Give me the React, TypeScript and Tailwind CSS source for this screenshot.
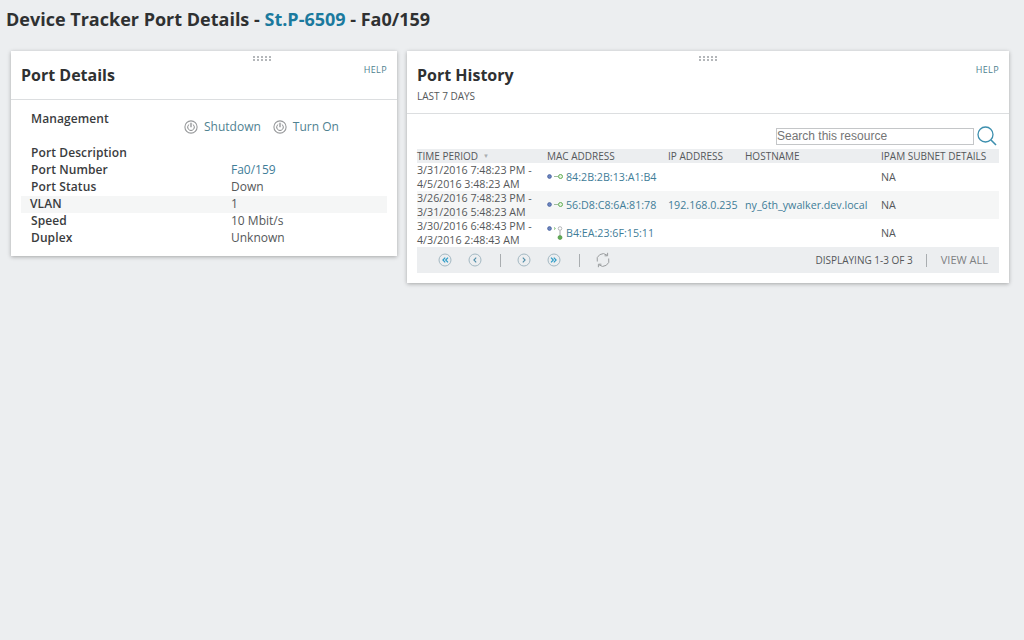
const font = { fontFamily: '"Open Sans", sans-serif' };

function Grip() {
  // five by two dots drag handle
  return (
    <div className="grid grid-cols-5 gap-x-[2px] gap-y-[1px] w-[18px]">
      {Array.from({ length: 10 }).map((_, i) => (
        <span key={i} className="w-[2px] h-[2px] bg-[#b4b7ba]" />
      ))}
    </div>
  );
}

function PowerIcon() {
  return (
    <svg width="14" height="14" viewBox="0 0 14 14" fill="none" className="shrink-0">
      <circle cx="7" cy="7" r="6.1" stroke="#97999b" strokeWidth="1.1" />
      <path d="M5.2 4.4a3.3 3.3 0 1 0 3.6 0" stroke="#85888a" strokeWidth="1" />
      <path d="M7 2.8v4.4" stroke="#85888a" strokeWidth="1.2" />
    </svg>
  );
}

function PagerIcon({ dir, double }: { dir: 'l' | 'r'; double?: boolean }) {
  const pts = dir === 'l' ? ['M7.2 4.6 4.9 7l2.3 2.4', 'M10 4.6 7.7 7l2.3 2.4'] : ['M6.8 4.6 9.1 7l-2.3 2.4', 'M4 4.6 6.3 7 4 9.4'];
  const single = dir === 'l' ? 'M8.2 4.6 5.9 7l2.3 2.4' : 'M5.8 4.6 8.1 7l-2.3 2.4';
  return (
    <svg width="14" height="14" viewBox="0 0 14 14" fill="none">
      <circle cx="7" cy="7" r="6" stroke="#a3b8c2" strokeWidth="1" />
      {double ? (
        pts.map((d) => <path key={d} d={d} stroke="#2d9cc7" strokeWidth="1.2" />)
      ) : (
        <path d={single} stroke="#4d8ba6" strokeWidth="1.1" />
      )}
    </svg>
  );
}

function RefreshIcon() {
  return (
    <svg width="16" height="16" viewBox="0 0 16 16" fill="none">
      <path d="M2.3 9.5A6 6 0 0 1 12 3.2" stroke="#9a9d9f" strokeWidth="1" />
      <path d="M13.7 6.5A6 6 0 0 1 4 12.8" stroke="#9a9d9f" strokeWidth="1" />
      <path d="M12.6 0.8v3h-3" stroke="#9a9d9f" strokeWidth="1" />
      <path d="M3.4 15.2v-3h3" stroke="#9a9d9f" strokeWidth="1" />
    </svg>
  );
}

function LinkIcon({ kind }: { kind: 'straight' | 'wireless' }) {
  if (kind === 'straight') {
    return (
      <svg width="18" height="8" viewBox="0 0 18 8" fill="none" className="shrink-0">
        <circle cx="2.5" cy="3.5" r="1.9" fill="#6d86c0" stroke="#3d5796" strokeWidth="0.7" />
        <path d="M7 3.5h4" stroke="#9dbb9d" strokeWidth="1" />
        <circle cx="13.5" cy="3.5" r="2" fill="#e6f3e0" stroke="#62ad54" strokeWidth="1" />
      </svg>
    );
  }
  return (
    <svg width="18" height="14" viewBox="0 0 18 14" fill="none" className="shrink-0">
      <circle cx="2.5" cy="2.5" r="1.9" fill="#6d86c0" stroke="#3d5796" strokeWidth="0.7" />
      <path d="M7 1.5l1.4 1-1.4 1" stroke="#62ad54" strokeWidth="0.8" />
      <circle cx="13" cy="2.5" r="1.8" fill="#fff" stroke="#a3a6a8" strokeWidth="0.8" />
      <path d="M13 4.5v5" stroke="#a3a6a8" strokeWidth="1" />
      <circle cx="13" cy="11.5" r="2" fill="#62ad54" stroke="#3f8a35" strokeWidth="0.6" />
    </svg>
  );
}

const detailRows = [
  { label: 'Port Description', value: '' },
  { label: 'Port Number', value: 'Fa0/159', link: true },
  { label: 'Port Status', value: 'Down' },
  { label: 'VLAN', value: '1', shaded: true },
  { label: 'Speed', value: '10 Mbit/s' },
  { label: 'Duplex', value: 'Unknown' },
];

const historyRows = [
  { from: '3/31/2016 7:48:23 PM -', to: '4/5/2016 3:48:23 AM', mac: '84:2B:2B:13:A1:B4', ip: '', host: '', icon: 'straight' as const },
  { from: '3/26/2016 7:48:23 PM -', to: '3/31/2016 5:48:23 AM', mac: '56:D8:C8:6A:81:78', ip: '192.168.0.235', host: 'ny_6th_ywalker.dev.local', icon: 'straight' as const, shaded: true },
  { from: '3/30/2016 6:48:43 PM -', to: '4/3/2016 2:48:43 AM', mac: 'B4:EA:23:6F:15:11', ip: '', host: '', icon: 'wireless' as const },
];

const cols = 'grid grid-cols-[130px_121px_77px_136px_118px]';

export default function App() {
  return (
    <div className="w-[1024px] h-[640px] overflow-hidden bg-[#eceef0] text-[#404040]" style={font}>
      {/* Title */}
      <h1 className="pl-[6px] pt-[7px] h-[51px] text-[18px] leading-[24px] font-bold text-[#2f3132]">
        Device Tracker Port Details - <span className="text-[#1b7a9e]">St.P-6509</span> - Fa0/159
      </h1>

      <div className="flex items-start pl-[11px] gap-[10px]">
        {/* Port Details */}
        <section className="w-[386px] h-[205px] bg-white shadow-[0_1px_4px_rgba(0,0,0,0.3)]">
          <header className="relative h-[49px] border-b border-[#dcdee0] pl-[10px]">
            <div className="absolute left-[242px] top-[5px]"><Grip /></div>
            <span className="absolute right-[10px] top-[13px] text-[9px] leading-[12px] tracking-[0.4px] text-[#4f8291]">HELP</span>
            <h2 className="pt-[13px] text-[16px] leading-[22px] font-bold text-[#2f3132]">Port Details</h2>
          </header>
          <div className="px-[10px] pt-[10px] text-[12px] leading-[15px]">
            <div className="flex h-[35px]">
              <div className="w-[163px] pl-[10px] leading-[17px] font-semibold tracking-[0.1px] text-[#3a3c3e]">Management</div>
              <div className="flex items-start gap-[12px] pt-[8px] leading-[17px] text-[#4f8291]">
                <span className="flex items-center gap-[6px]"><PowerIcon />Shutdown</span>
                <span className="flex items-center gap-[6px]"><PowerIcon />Turn On</span>
              </div>
            </div>
            {detailRows.map((row) => (
              <div key={row.label} className={`flex h-[17px] ${row.shaded ? 'bg-[#f5f6f6]' : ''}`}>
                <div className={`w-[210px] font-semibold tracking-[0.1px] text-[#3a3c3e] ${row.shaded ? 'pl-[9px]' : 'pl-[10px]'}`}>{row.label}</div>
                <div className={row.link ? 'text-[#3f7d98]' : 'text-[#55585a]'}>{row.value}</div>
              </div>
            ))}
          </div>
        </section>

        {/* Port History */}
        <section className="w-[602px] h-[232px] bg-white shadow-[0_1px_4px_rgba(0,0,0,0.3)]">
          <header className="relative h-[63px] border-b border-[#dcdee0] pl-[10px]">
            <div className="absolute left-[292px] top-[5px]"><Grip /></div>
            <span className="absolute right-[10px] top-[13px] text-[9px] leading-[12px] tracking-[0.4px] text-[#4f8291]">HELP</span>
            <h2 className="pt-[13px] text-[16px] leading-[22px] font-bold text-[#2f3132]">Port History</h2>
            <p className="pt-[4px] text-[10px] leading-[12px] text-[#55585a]">LAST 7 DAYS</p>
          </header>
          <div className="px-[10px]">
            <div className="flex justify-end items-center h-[35px] pt-[9px] pr-[2px] gap-[3px]">
              <div className="w-[198px] h-[17px] border border-[#c4c6c8] text-[12px] leading-[15px] text-[#757575]" style={{ fontFamily: '"Liberation Sans", sans-serif' }}>
                Search this resource
              </div>
              <svg width="20" height="20" viewBox="0 0 20 20" fill="none">
                <circle cx="8.5" cy="8.5" r="7.5" stroke="#3d8fae" strokeWidth="1.3" />
                <path d="M14 14l5 5" stroke="#3d8fae" strokeWidth="1.6" />
              </svg>
            </div>
            <div className={`${cols} h-[14px] bg-[#eceef0] text-[10px] leading-[15px] text-[#55585a]`}>
              <div className="flex items-center gap-[5px]">TIME PERIOD <span className="text-[6px] text-[#a9adb0]">▼</span></div>
              <div>MAC ADDRESS</div>
              <div>IP ADDRESS</div>
              <div>HOSTNAME</div>
              <div>IPAM SUBNET DETAILS</div>
            </div>
            {historyRows.map((row) => (
              <div key={row.mac} className={`${cols} h-[28px] items-center text-[10.7px] leading-[14px] ${row.shaded ? 'bg-[#f5f6f6]' : ''}`}>
                <div className="text-[#55585a] whitespace-nowrap">
                  {row.from}
                  <br />
                  {row.to}
                </div>
                <div className="flex items-center text-[#3f7d98] whitespace-nowrap">
                  <LinkIcon kind={row.icon} />
                  <span className="pl-px">{row.mac}</span>
                </div>
                <div className="text-[#3f7d98]">{row.ip}</div>
                <div className="text-[#3f7d98] whitespace-nowrap">{row.host}</div>
                <div className="text-[#55585a]">NA</div>
              </div>
            ))}
            <div className="flex items-center h-[26px] bg-[#eceef0] pl-[21px] pr-[11px]">
              <PagerIcon dir="l" double />
              <span className="w-[16px]" />
              <PagerIcon dir="l" />
              <span className="ml-[18px] mr-[16px] h-[13px] w-px bg-[#a9adb0]" />
              <PagerIcon dir="r" />
              <span className="w-[16px]" />
              <PagerIcon dir="r" double />
              <span className="ml-[18px] mr-[15px] h-[13px] w-px bg-[#a9adb0]" />
              <RefreshIcon />
              <span className="ml-auto text-[10px] text-[#55585a]">DISPLAYING 1-3 OF 3</span>
              <span className="ml-[13px] mr-[14px] h-[13px] w-px bg-[#a9adb0]" />
              <span className="text-[11px] text-[#7d8082]">VIEW ALL</span>
            </div>
          </div>
        </section>
      </div>
    </div>
  );
}
